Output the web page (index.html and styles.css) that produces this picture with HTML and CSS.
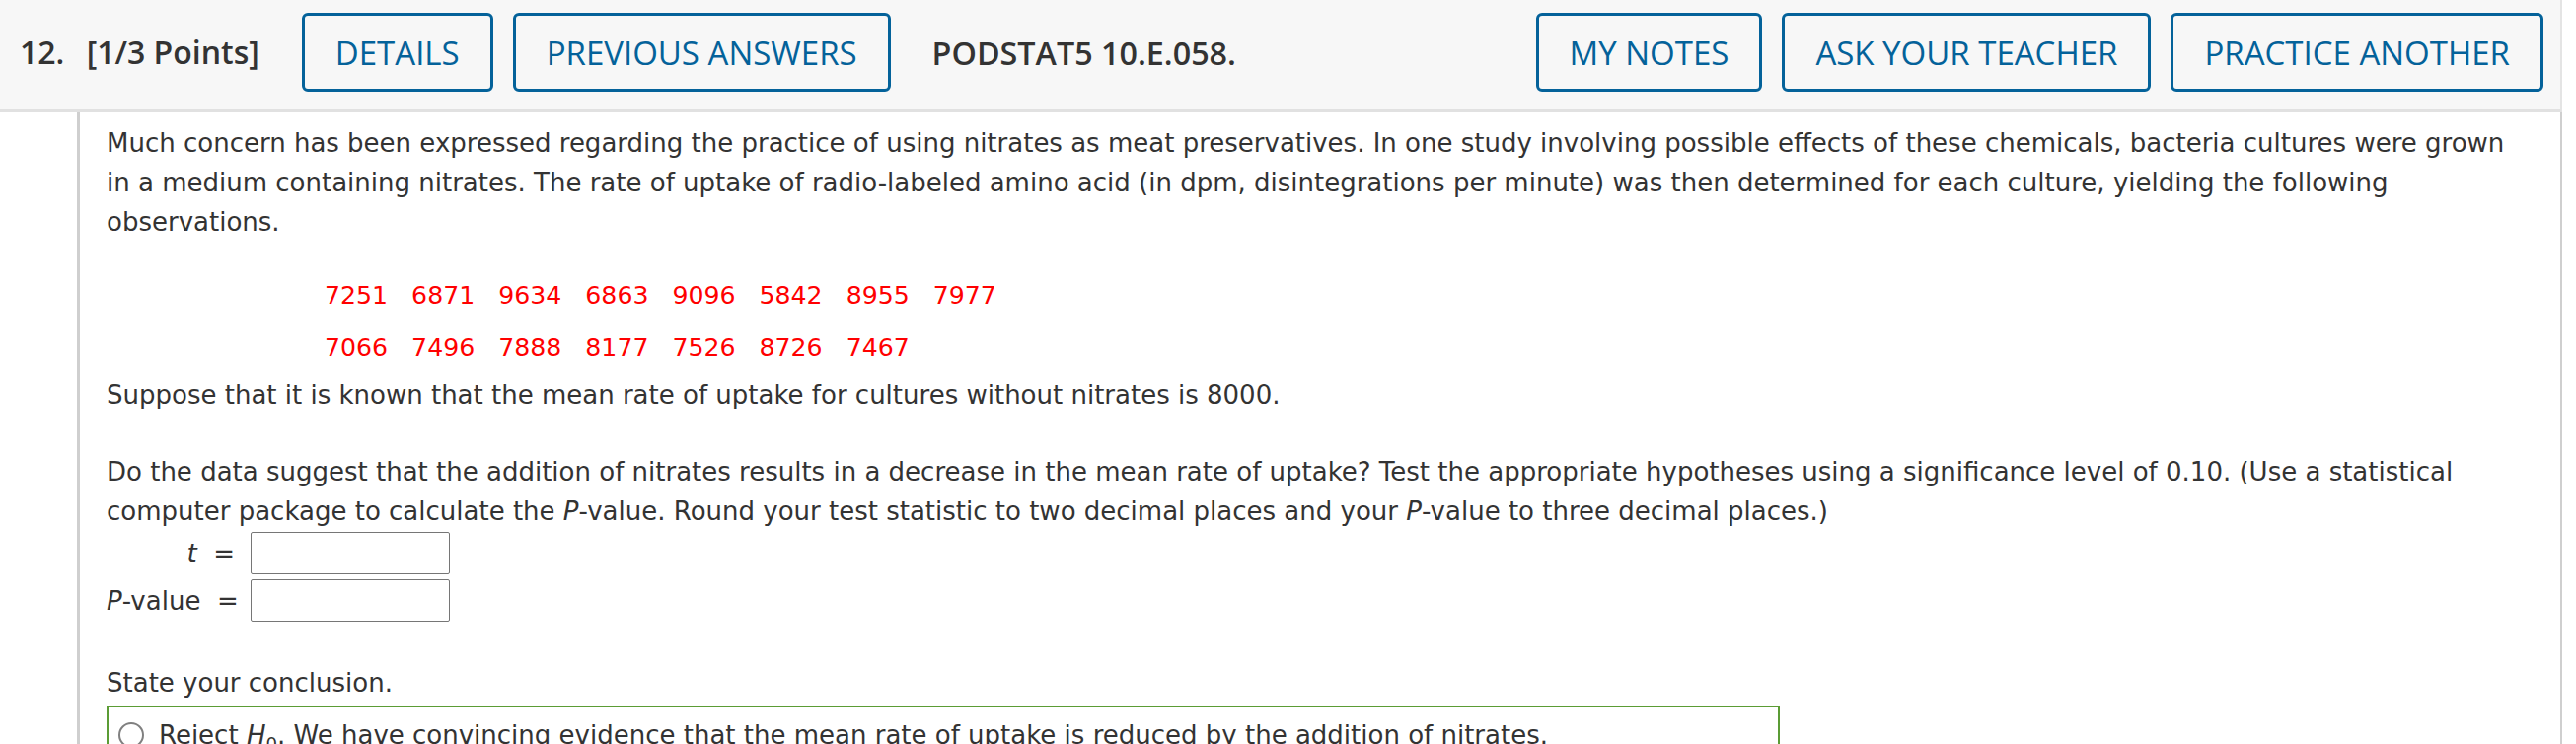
FILE: index.html
```html
<!DOCTYPE html>
<html lang="en">
<head>
  <meta charset="UTF-8">
  <title>Question 12</title>
  <link rel="stylesheet" href="styles.css">
</head>
<body>
  <div class="question">
    <div class="q-header">
      <div class="q-title"><span class="q-num">12.</span> [1/3 Points]</div>
      <button class="q-btn">DETAILS</button>
      <button class="q-btn">PREVIOUS ANSWERS</button>
      <div class="q-code">PODSTAT5 10.E.058.</div>
      <div class="q-actions">
        <button class="q-btn">MY NOTES</button>
        <button class="q-btn">ASK YOUR TEACHER</button>
        <button class="q-btn">PRACTICE ANOTHER</button>
      </div>
    </div>
    <div class="q-body">
      <p class="intro">Much concern has been expressed regarding the practice of using nitrates as meat preservatives. In one study involving possible effects of these chemicals, bacteria cultures were grown in a medium containing nitrates. The rate of uptake of radio-labeled amino acid (in dpm, disintegrations per minute) was then determined for each culture, yielding the following observations.</p>
      <table class="data">
        <tr><td>7251</td><td>6871</td><td>9634</td><td>6863</td><td>9096</td><td>5842</td><td>8955</td><td>7977</td></tr>
        <tr><td>7066</td><td>7496</td><td>7888</td><td>8177</td><td>7526</td><td>8726</td><td>7467</td></tr>
      </table>
      <p>Suppose that it is known that the mean rate of uptake for cultures without nitrates is 8000.</p>
      <p class="spaced">Do the data suggest that the addition of nitrates results in a decrease in the mean rate of uptake? Test the appropriate hypotheses using a significance level of 0.10. (Use a statistical computer package to calculate the <i>P</i>-value. Round your test statistic to two decimal places and your <i>P</i>-value to three decimal places.)</p>
      <div class="answers">
        <label class="ans-label"><i>t</i> &nbsp;=</label>
        <input class="ans-input" type="text">
        <label class="ans-label"><i>P</i>-value &nbsp;=</label>
        <input class="ans-input" type="text">
      </div>
      <p class="conclusion">State your conclusion.</p>
      <div class="choices">
        <label class="choice"><span class="radio"></span>Reject <i>H</i><sub>0</sub>. We have convincing evidence that the mean rate of uptake is reduced by the addition of nitrates.</label>
      </div>
    </div>
  </div>
</body>
</html>
```

FILE: styles.css
```css
* { margin: 0; padding: 0; box-sizing: border-box; }
body {
  background: #fff;
  color: #333;
  font-family: 'DejaVu Sans', Verdana, sans-serif;
  font-size: 26px;
  line-height: 40px;
  overflow: hidden;
}
.question { width: 2597px; }
/* Header */
.q-header {
  display: flex;
  align-items: center;
  gap: 20px;
  background: #f7f7f7;
  border-bottom: 3px solid #e1e1e1;
  border-right: 2px solid #e4e4e4;
  padding: 13px 17px 17px 20px;
  font-family: 'Open Sans', sans-serif;
  font-size: 32px;
  color: #333;
}
.q-title { font-weight: 600; white-space: nowrap; margin-right: 23px; }
.q-num { margin-right: 14px; }
.q-code { font-weight: 600; font-size: 32.3px; margin-left: 22px; white-space: nowrap; }
.q-actions { margin-left: auto; display: flex; gap: 20px; }
.q-btn {
  height: 80px;
  padding: 0 31px;
  background: transparent;
  border: 3px solid #04629a;
  border-radius: 6px;
  color: #04629a;
  font-family: 'Open Sans', sans-serif;
  font-size: 33px;
  white-space: nowrap;
  cursor: pointer;
}
/* Body */
.q-body {
  margin-left: 78px;
  border-left: 3px solid #cfcfcf;
  border-right: 2px solid #cfcfcf;
  padding: 12px 36px 0 27px;
}
.data {
  border-collapse: collapse;
  margin: 29px 0 0 209px;
  color: #f00;
  font-size: 25.2px;
}
.data td { padding: 12px 12px 13px; line-height: 28px; }
.spaced { margin-top: 38px; }
.answers {
  display: grid;
  grid-template-columns: 130px 202px;
  gap: 5px 16px;
  align-items: center;
  margin-top: 1px;
}
.ans-label { text-align: right; white-space: nowrap; }
.ans-input {
  height: 43px;
  border: 1px solid #767676;
  border-radius: 2px;
  font: inherit;
}
.conclusion { margin-top: 42px; }
.choices {
  width: 1696px;
  margin-top: 3px;
  border: 2px solid #5b9c35;
  padding: 8px 10px;
}
.choice { display: block; white-space: nowrap; }
.radio {
  display: inline-block;
  vertical-align: -4px;
  width: 26px;
  height: 26px;
  border: 2px solid #808080;
  border-radius: 50%;
  margin-right: 15px;
}
sub { font-size: 0.7em; line-height: 0; }
```
